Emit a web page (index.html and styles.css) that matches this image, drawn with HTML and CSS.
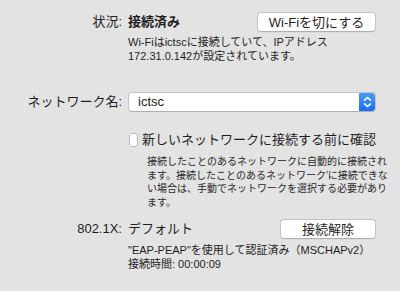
FILE: index.html
```html
<!DOCTYPE html>
<html lang="ja">
<head>
<meta charset="utf-8">
<link rel="stylesheet" href="styles.css">
</head>
<body>
<div class="pane">
  <div class="row row-status">
    <div class="label">状況:</div>
    <div class="value split">
      <span class="strong">接続済み</span>
      <button class="btn btn-wifi">Wi-Fiを切にする</button>
    </div>
  </div>
  <div class="row row-desc">
    <div></div>
    <div class="desc">Wi-Fiはictscに接続していて、IPアドレス<br>172.31.0.142が設定されています。</div>
  </div>
  <div class="row row-network">
    <div class="label">ネットワーク名:</div>
    <div class="popup">
      <span class="popup-text">ictsc</span>
      <span class="stepper">
        <svg width="9" height="12" viewBox="0 0 9 12"><path d="M1.5 4.2 L4.5 1.5 L7.5 4.2 M1.5 7.8 L4.5 10.5 L7.5 7.8" fill="none" stroke="#fff" stroke-width="1.6" stroke-linecap="round" stroke-linejoin="round"/></svg>
      </span>
    </div>
  </div>
  <div class="row row-check">
    <div></div>
    <label class="check"><span class="box"></span><span>新しいネットワークに接続する前に確認</span></label>
  </div>
  <div class="row row-small">
    <div></div>
    <div class="small">接続したことのあるネットワークに自動的に接続され<br>ます。接続したことのあるネットワーク'に接続できな<br>い場合は、手動でネットワークを選択する必要があり<br>ます。</div>
  </div>
  <div class="row row-8021x">
    <div class="label">802.1X:</div>
    <div class="value split">
      <span>デフォルト</span>
      <button class="btn btn-disc">接続解除</button>
    </div>
  </div>
  <div class="row row-desc2">
    <div></div>
    <div class="desc">"EAP-PEAP"を使用して認証済み（MSCHAPv2）<br>接続時間: 00:00:09</div>
  </div>
</div>
</body>
</html>
```
FILE: styles.css
```css
html, body {
  margin: 0;
  padding: 0;
  background: #e3e3e3;
}
body {
  width: 400px;
  height: 291px;
  overflow: hidden;
  font-family: "Liberation Sans", "Noto Sans CJK JP", sans-serif;
  color: #1f1f1f;
}
.pane {
  padding-top: 12px;
}
.row {
  display: grid;
  grid-template-columns: 122px 248px;
  column-gap: 6px;
  align-items: center;
}
.label {
  text-align: right;
  font-size: 13px;
  line-height: 20px;
  white-space: nowrap;
}
.value {
  font-size: 13px;
  line-height: 20px;
}
.split {
  display: flex;
  justify-content: space-between;
  align-items: center;
}
.strong {
  font-weight: bold;
}
.btn {
  font-family: inherit;
  font-size: 13px;
  line-height: 17px;
  height: 20px;
  padding: 0;
  background: #ffffff;
  border: 1px solid #c4c4c4;
  border-bottom-color: #b0b0b0;
  border-radius: 4px;
  color: #1f1f1f;
  box-shadow: 0 0.5px 0 rgba(0,0,0,0.08);
}
.btn-wifi {
  width: 119px;
}
.btn-disc {
  width: 96px;
}
.row-desc {
  margin-top: 3px;
}
.desc {
  font-size: 11px;
  line-height: 14px;
  white-space: nowrap;
}
.row-network {
  margin-top: 29px;
}
.popup {
  display: flex;
  align-items: stretch;
  height: 20px;
  background: #fff;
  border: 1px solid #c4c4c4;
  border-bottom-color: #b0b0b0;
  border-radius: 4px;
  box-sizing: border-box;
  overflow: hidden;
}
.popup-text {
  flex: 1;
  font-size: 13px;
  line-height: 18px;
  padding-left: 9px;
}
.stepper {
  width: 16px;
  display: flex;
  align-items: center;
  justify-content: center;
  background: linear-gradient(#4a9afa, #1a6df2);
}
.row-check {
  margin-top: 21px;
}
.check {
  display: flex;
  align-items: center;
  gap: 4px;
  font-size: 13px;
  line-height: 14px;
  white-space: nowrap;
}
.box {
  width: 12px;
  height: 12px;
  margin-left: 1px;
  background: #fff;
  border: 1px solid #b8b8b8;
  border-radius: 3px;
}
.row-small {
  margin-top: 8px;
}
.small {
  padding-left: 19px;
  font-size: 10px;
  line-height: 13.5px;
  white-space: nowrap;
  color: #2a2a2a;
}
.row-8021x {
  margin-top: 10px;
}
.row-desc2 {
  margin-top: 4px;
}
```
